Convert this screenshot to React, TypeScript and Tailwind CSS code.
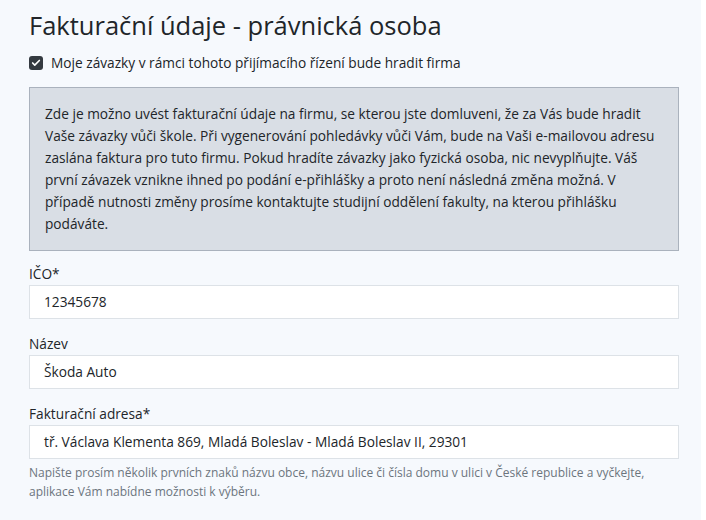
import { Check } from 'lucide-react';

const fields = [
  { label: 'IČO*', value: '12345678' },
  { label: 'Název', value: 'Škoda Auto' },
  { label: 'Fakturační adresa*', value: 'tř. Václava Klementa 869, Mladá Boleslav - Mladá Boleslav II, 29301' },
];

function App() {
  return (
    <div className="min-h-screen bg-white" style={{ fontFamily: '"Open Sans", sans-serif' }}>
      <div className="w-[701px] min-h-[520px] bg-[#f6f9fd] pl-[29px] pr-[22px] pt-[8px] pb-6 text-[#212529]">
        <h1 className="text-[25.5px] font-medium leading-[34px] text-[#212529]">Fakturační údaje - právnická osoba</h1>

        <label className="mt-[11px] flex items-center gap-[8px] text-[13.7px] leading-[20px]">
          <span className="flex h-[14px] w-[14px] items-center justify-center rounded-[3px] bg-[#343a40]">
            <Check className="h-[10px] w-[10px] text-white" strokeWidth={4} />
          </span>
          <span>Moje závazky v rámci tohoto přijímacího řízení bude hradit firma</span>
        </label>

        <div className="mt-[14px] border border-[#aab2bd] bg-[#d9dee5] px-[15px] py-[15px] text-[13.7px] leading-[22px] text-[#212529]">
          Zde je možno uvést fakturační údaje na firmu, se kterou jste domluveni, že za Vás bude hradit Vaše závazky vůči škole. Při
          vygenerování pohledávky vůči Vám, bude na Vaši e-mailovou adresu zaslána faktura pro tuto firmu. Pokud hradíte závazky
          jako fyzická osoba, nic nevyplňujte. Váš první závazek vznikne ihned po podání e-přihlášky a proto není následná změna
          možná. V případě nutnosti změny prosíme kontaktujte studijní oddělení fakulty, na kterou přihlášku podáváte.
        </div>

        <div className="mt-[13px] flex flex-col gap-[15px]">
          {fields.map(f => (
            <div key={f.label}>
              <div className="mb-[1px] text-[13.7px] leading-[20px]">{f.label}</div>
              <div className="flex h-[34px] items-center border border-[#dde2e7] bg-white px-[14px] text-[13.7px] text-[#212529]">
                {f.value}
              </div>
            </div>
          ))}
        </div>

        <p className="mt-[4px] text-[12px] leading-[19px] text-[#6c757d]">
          Napište prosím několik prvních znaků názvu obce, názvu ulice či čísla domu v ulici v České republice a vyčkejte,
          aplikace Vám nabídne možnosti k výběru.
        </p>
      </div>
    </div>
  );
}

export default App;
